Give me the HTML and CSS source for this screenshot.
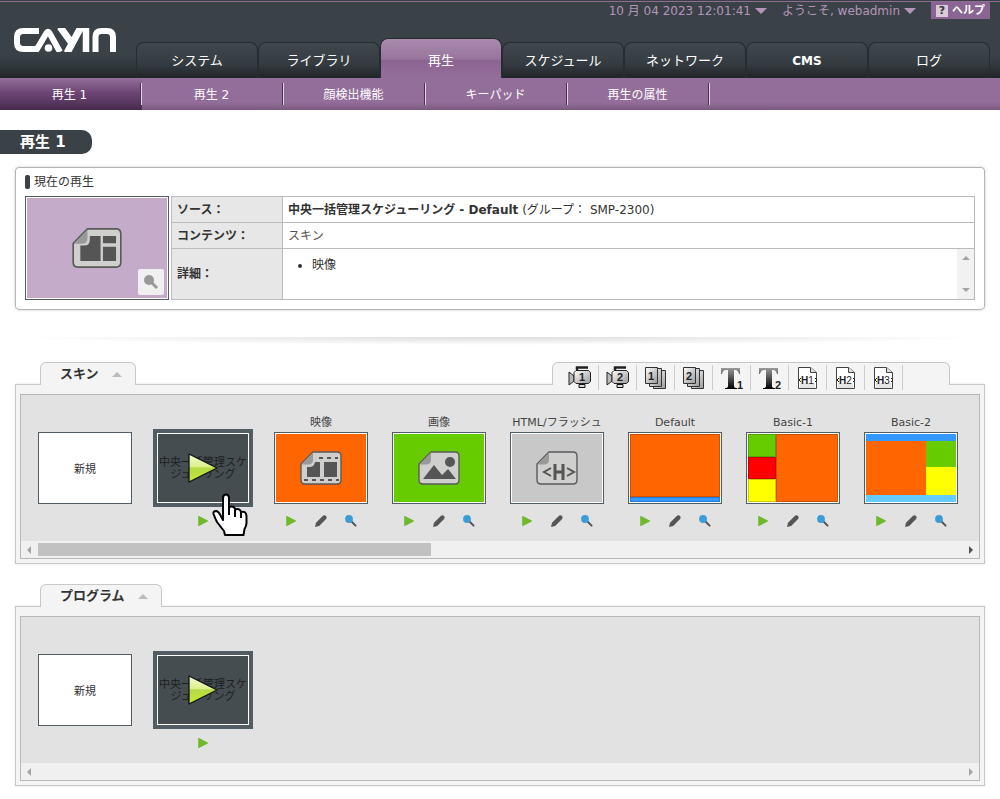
FILE: index.html
```html
<!DOCTYPE html>
<html lang="ja">
<head>
<meta charset="utf-8">
<title>再生 1</title>
<link rel="stylesheet" href="styles.css">
</head>
<body>
<svg class="defs" aria-hidden="true">
  <defs>
    <linearGradient id="metal" x1="0" y1="0" x2="1" y2="1"><stop offset="0" stop-color="#fff"/><stop offset="1" stop-color="#999"/></linearGradient>
    <linearGradient id="ink" x1="0" y1="0" x2="0" y2="1"><stop offset="0" stop-color="#999"/><stop offset="1" stop-color="#000"/></linearGradient>
    <linearGradient id="lime" x1="0" y1="0" x2="0" y2="1"><stop offset="0" stop-color="#f4fbd5"/><stop offset=".45" stop-color="#dcef8a"/><stop offset=".5" stop-color="#b5d943"/><stop offset="1" stop-color="#c5ea3a"/></linearGradient>
    <symbol id="play" viewBox="0 0 12 12"><path d="M1.200 1.600v8.800q0 .800.800.500l8.700-4.300q.900-.600 0-1.200L2 1.100q-.800-.300-.800.500z" fill="#6fb92c"/></symbol>
    <symbol id="pencil" viewBox="0 0 14 14"><path d="M1 13l1-4.200L9 1.800q1.500-1.300 3 .100 1.400 1.500.1 3L5.200 12z" fill="#555"/></symbol>
    <symbol id="lens" viewBox="0 0 14 14"><path d="M7 7l4.600 4.600" stroke="#555" stroke-width="2" stroke-linecap="round"/><circle cx="5" cy="5" r="3.900" fill="#3c9bd9"/></symbol>
    <symbol id="sheet" viewBox="0 0 42 34"><path d="M13 1h24q4 0 4 4v24q0 4-4 4H5q-4 0-4-4V13z" fill="#cfcfcd" stroke="#5a5a5a" stroke-width="1.400"/><path d="M13 1.500v7q0 5-5 5H1.500z" fill="#999"/></symbol>
    <symbol id="bigplay" viewBox="0 0 32 32"><path d="M2 2v28l28-14z" fill="url(#lime)" stroke="#111" stroke-width="1.300" stroke-linejoin="round"/></symbol>
    <symbol id="camera" viewBox="0 0 24 24"><path d="M1 6l5 4v5l-5 4z" fill="#bbb" stroke="#222"/><path d="M9 4V1.500h11" fill="none" stroke="#222" stroke-width="2.500"/><path d="M8 4.500h12.500l2 2v9l-2 2H8l-2-2v-9z" fill="url(#metal)" stroke="#222"/><path d="M11 18.500h6v3h-6z" fill="#ddd" stroke="#111"/></symbol>
    <symbol id="stack" viewBox="0 0 24 24"><path d="M9.500 4.500h12v18h-12z" fill="url(#metal)" stroke="#333"/><path d="M5.500 2.500h12v18h-12z" fill="url(#metal)" stroke="#333"/><path d="M1.500 1.500h12v16h-12z" fill="url(#metal)" stroke="#333"/></symbol>
    <symbol id="tee" viewBox="0 0 24 24"><path d="M1 2h19v6h-1q-1-4-4-4h-1v16q0 2 3 2v1H5v-1q3 0 3-2V4H6Q3 4 2 8H1z" fill="url(#ink)"/></symbol>
    <symbol id="page" viewBox="0 0 24 24"><path d="M2.500 1.500h12l6 5v16h-18z" fill="#fff" stroke="#444"/><path d="M14.500 1.500v5h6" fill="#ddd" stroke="#444"/><path d="M4 17h15v5H4z" fill="#e5e5e5"/></symbol>
  </defs>
</svg>

<header class="header">
  <a class="logo" href="#" aria-label="CAYIN">
    <svg viewBox="0 0 102 24" width="102" height="24" fill="none" stroke="#fff" stroke-width="6">
      <path d="M25 3H9.500Q3 3 3 9v6q0 6 6.500 6H23L32.500 5q1.500-2.500 3 0L46 24"/>
      <circle cx="34.500" cy="20" r="3.800" fill="#fff" stroke="none"/>
      <path d="M46 -1l11 15M67 -1L53 25" stroke-width="7"/>
      <path d="M72 0v24" stroke-width="6.500"/>
      <path d="M81.500 24V9q0-6 6-6H93q6 0 6 6v15" stroke-width="6"/>
    </svg>
  </a>
  <div class="utility">
    <button class="util-button clock">10 月 04 2023 12:01:41 <i class="caret"></i></button>
    <button class="util-button user">ようこそ, webadmin <i class="caret"></i></button>
    <a class="help" href="#"><span class="help-mark">?</span>ヘルプ</a>
  </div>
  <nav class="tabs">
    <a class="tab" href="#">システム</a>
    <a class="tab" href="#">ライブラリ</a>
    <a class="tab tab-active" href="#">再生</a>
    <a class="tab" href="#">スケジュール</a>
    <a class="tab" href="#">ネットワーク</a>
    <a class="tab tab-latin" href="#">CMS</a>
    <a class="tab" href="#">ログ</a>
  </nav>
</header>
<nav class="subnav">
  <a class="sub sub-active" href="#">再生 1</a>
  <a class="sub" href="#">再生 2</a>
  <a class="sub" href="#">顔検出機能</a>
  <a class="sub" href="#">キーパッド</a>
  <a class="sub" href="#">再生の属性</a>
</nav>

<main>
  <h1 class="page-title">再生 1</h1>

  <section class="current">
    <h2 class="current-title">現在の再生</h2>
    <div class="current-body">
      <div class="preview">
        <svg class="preview-icon" viewBox="0 0 42 34" width="50" height="42"><use href="#sheet"/><path d="M7 15h3q5 0 5-5V7h9v21H7zM26 7h11v6H26zM26 16h11v12H26z" fill="#555"/></svg>
        <button class="preview-zoom" aria-label="拡大">
          <svg viewBox="0 0 18 18" width="18" height="18"><path d="M9 9l6 6" stroke="#999" stroke-width="3"/><circle cx="7" cy="7" r="5" fill="#999"/></svg>
        </button>
      </div>
      <table class="info">
        <tr><th scope="row">ソース：</th><td><strong>中央一括管理スケジューリング - Default</strong> (グループ： SMP-2300)</td></tr>
        <tr><th scope="row">コンテンツ：</th><td class="soft">スキン</td></tr>
        <tr><th scope="row">詳細：</th><td class="detail-cell">
          <div class="detail">
            <ul class="detail-list"><li>映像</li></ul>
            <div class="vscroll"><button class="arrow arrow-up" aria-label="上へ"></button><button class="arrow arrow-down" aria-label="下へ"></button></div>
          </div>
        </td></tr>
      </table>
    </div>
  </section>

  <div class="divider"></div>

  <section class="shelf">
    <div class="shelf-head">
      <button class="shelf-tab">スキン<i class="fold"></i></button>
      <div class="toolbar">
        <button class="tool"><svg width="24" height="24" viewBox="0 0 24 24"><use href="#camera"/><text class="tool-num" x="14" y="15">1</text></svg></button>
        <button class="tool"><svg width="24" height="24" viewBox="0 0 24 24"><use href="#camera"/><text class="tool-num" x="14" y="15">2</text></svg></button>
        <button class="tool"><svg width="24" height="24" viewBox="0 0 24 24"><use href="#stack"/><text class="tool-num" x="7" y="14">1</text></svg></button>
        <button class="tool"><svg width="24" height="24" viewBox="0 0 24 24"><use href="#stack"/><text class="tool-num" x="7" y="14">2</text></svg></button>
        <button class="tool"><svg width="24" height="24" viewBox="0 0 24 24"><use href="#tee"/><text class="tool-num" x="20" y="23">1</text></svg></button>
        <button class="tool"><svg width="24" height="24" viewBox="0 0 24 24"><use href="#tee"/><text class="tool-num" x="20" y="23">2</text></svg></button>
        <button class="tool"><svg width="24" height="24" viewBox="0 0 24 24"><use href="#page"/><path d="M5 12l-2 2 2 2M19 12l2 2-2 2" class="angle"/><text class="tool-h" x="5" y="18"><tspan class="tool-bold">H</tspan>1</text></svg></button>
        <button class="tool"><svg width="24" height="24" viewBox="0 0 24 24"><use href="#page"/><path d="M5 12l-2 2 2 2M19 12l2 2-2 2" class="angle"/><text class="tool-h" x="5" y="18"><tspan class="tool-bold">H</tspan>2</text></svg></button>
        <button class="tool"><svg width="24" height="24" viewBox="0 0 24 24"><use href="#page"/><path d="M5 12l-2 2 2 2M19 12l2 2-2 2" class="angle"/><text class="tool-h" x="5" y="18"><tspan class="tool-bold">H</tspan>3</text></svg></button>
      </div>
    </div>
    <div class="shelf-body">
      <div class="viewport">
        <div class="strip">
          <div class="item"><div class="name"></div><div class="stage"><button class="thumb thumb-new">新規</button></div></div>
          <div class="item">
            <div class="name"></div>
            <div class="stage">
              <button class="thumb thumb-hover"><span class="hover-name">中央一括管理スケジューリング</span><svg class="big-play" width="32" height="32"><use href="#bigplay"/></svg></button>
              <svg class="hand" viewBox="0 0 36 44" width="36" height="44"><path d="M11 27V5q0-3.500 3-3.500T17 5v10q1-2 3-1.500 3 .5 3 3 5-1.500 6 2.500 5-1.500 5.500 4v7q0 3-2 6l-1 6H13l-1-4q-4-5-7-9-2-4-3.500-8Q1 18 4 18q2 0 4 3.500l3 5.500z" fill="#fff" stroke="#000" stroke-width="2" stroke-linejoin="round"/><path d="M17 14v8M23 17v7M29 19v6" stroke="#000" stroke-width="2"/></svg>
            </div>
            <div class="actions"><button class="action" aria-label="再生"><svg width="12" height="12"><use href="#play"/></svg></button></div>
          </div>
          <div class="item">
            <div class="name">映像</div>
            <div class="stage"><button class="thumb"><span class="art orange"><svg viewBox="0 0 42 34" width="42" height="34"><use href="#sheet"/><path d="M7 16h3q4 0 5-5h5v15H7zM24 11h13v15H24z" fill="#555"/><path d="M19 7h19M4 29h35" stroke="#555" stroke-width="2" stroke-dasharray="4 4"/></svg></span></button></div>
            <div class="actions"><button class="action" aria-label="再生"><svg width="12" height="12"><use href="#play"/></svg></button><button class="action" aria-label="編集"><svg width="14" height="14"><use href="#pencil"/></svg></button><button class="action" aria-label="拡大"><svg width="14" height="14"><use href="#lens"/></svg></button></div>
          </div>
          <div class="item">
            <div class="name">画像</div>
            <div class="stage"><button class="thumb"><span class="art green"><svg viewBox="0 0 42 34" width="42" height="34"><use href="#sheet"/><path d="M5 28l11-14 8 10 6-6 8 10z" fill="#555"/><circle cx="32" cy="11" r="5" fill="#555"/></svg></span></button></div>
            <div class="actions"><button class="action" aria-label="再生"><svg width="12" height="12"><use href="#play"/></svg></button><button class="action" aria-label="編集"><svg width="14" height="14"><use href="#pencil"/></svg></button><button class="action" aria-label="拡大"><svg width="14" height="14"><use href="#lens"/></svg></button></div>
          </div>
          <div class="item">
            <div class="name">HTML/フラッシュ</div>
            <div class="stage"><button class="thumb"><span class="art silver"><svg viewBox="0 0 42 34" width="42" height="34"><use href="#sheet"/><path d="M15 17l-7 4 7 4M31 17l7 4-7 4" fill="none" stroke="#555" stroke-width="2"/><path d="M19 13v16M27 13v16M19 21h8" stroke="#555" stroke-width="3"/></svg></span></button></div>
            <div class="actions"><button class="action" aria-label="再生"><svg width="12" height="12"><use href="#play"/></svg></button><button class="action" aria-label="編集"><svg width="14" height="14"><use href="#pencil"/></svg></button><button class="action" aria-label="拡大"><svg width="14" height="14"><use href="#lens"/></svg></button></div>
          </div>
          <div class="item">
            <div class="name">Default</div>
            <div class="stage"><button class="thumb"><span class="art layout-default"><i class="orange edge"></i><i class="blue edge"></i></span></button></div>
            <div class="actions"><button class="action" aria-label="再生"><svg width="12" height="12"><use href="#play"/></svg></button><button class="action" aria-label="編集"><svg width="14" height="14"><use href="#pencil"/></svg></button><button class="action" aria-label="拡大"><svg width="14" height="14"><use href="#lens"/></svg></button></div>
          </div>
          <div class="item">
            <div class="name">Basic-1</div>
            <div class="stage"><button class="thumb"><span class="art layout-one"><i class="green edge"></i><i class="orange edge main-zone"></i><i class="red edge"></i><i class="yellow edge"></i></span></button></div>
            <div class="actions"><button class="action" aria-label="再生"><svg width="12" height="12"><use href="#play"/></svg></button><button class="action" aria-label="編集"><svg width="14" height="14"><use href="#pencil"/></svg></button><button class="action" aria-label="拡大"><svg width="14" height="14"><use href="#lens"/></svg></button></div>
          </div>
          <div class="item">
            <div class="name">Basic-2</div>
            <div class="stage"><button class="thumb"><span class="art layout-two"><i class="blue wide"></i><i class="orange tall"></i><i class="green"></i><i class="yellow"></i><i class="sky wide"></i></span></button></div>
            <div class="actions"><button class="action" aria-label="再生"><svg width="12" height="12"><use href="#play"/></svg></button><button class="action" aria-label="編集"><svg width="14" height="14"><use href="#pencil"/></svg></button><button class="action" aria-label="拡大"><svg width="14" height="14"><use href="#lens"/></svg></button></div>
          </div>
        </div>
        <div class="hscroll"><button class="arrow arrow-left" aria-label="左へ"></button><div class="track"><div class="grip"></div></div><button class="arrow arrow-right arrow-live" aria-label="右へ"></button></div>
      </div>
    </div>
  </section>

  <section class="shelf">
    <div class="shelf-head">
      <button class="shelf-tab">プログラム<i class="fold"></i></button>
    </div>
    <div class="shelf-body">
      <div class="viewport">
        <div class="strip">
          <div class="item"><div class="name"></div><div class="stage"><button class="thumb thumb-new">新規</button></div></div>
          <div class="item">
            <div class="name"></div>
            <div class="stage">
              <button class="thumb thumb-hover"><span class="hover-name">中央一括管理スケジューリング</span><svg class="big-play" width="32" height="32"><use href="#bigplay"/></svg></button>
            </div>
            <div class="actions"><button class="action" aria-label="再生"><svg width="12" height="12"><use href="#play"/></svg></button></div>
          </div>
        </div>
        <div class="hscroll"><button class="arrow arrow-left" aria-label="左へ"></button><div class="track"></div><button class="arrow arrow-right" aria-label="右へ"></button></div>
      </div>
    </div>
  </section>
</main>
</body>
</html>
```

FILE: styles.css
```css
*, *::before, *::after { box-sizing: border-box; }
body {
  margin: 0;
  background: #fff;
  color: #333;
  font: 12px/16px "DejaVu Sans", "Noto Sans CJK JP", sans-serif;
}
button {
  margin: 0;
  padding: 0;
  border: 0;
  background: none;
  color: inherit;
  font: inherit;
  cursor: pointer;
}
a { color: inherit; text-decoration: none; }
svg { display: block; }
.defs { position: absolute; width: 0; height: 0; }

/* Header */
.header {
  display: grid;
  grid-template-columns: 136px 1fr;
  grid-template-rows: 36px 40px;
  border-top: 1px solid #3a4146;
  background: linear-gradient(#3a4247 70%, #30373b 85%, #1f2427);
  box-shadow: inset 0 1px #8f6b96;
  padding: 1px 10px 0 0;
}
.logo {
  grid-row: 1 / 3;
  align-self: center;
  padding-left: 14px;
}
.utility {
  display: flex;
  justify-content: flex-end;
  align-items: flex-start;
  color: #b595bb;
}
.util-button {
  display: flex;
  align-items: center;
  gap: 4px;
  line-height: 18px;
}
.user { margin: 0 15px; }
.caret {
  border: 6px solid transparent;
  border-top-color: #b595bb;
  border-bottom: 0;
}
.help {
  display: flex;
  align-items: center;
  gap: 4px;
  height: 17px;
  padding: 0 5px;
  background: #8a6493;
  color: #fff;
  font-size: 11px;
  font-weight: bold;
  line-height: 15px;
}
.help-mark {
  width: 12px;
  height: 12px;
  background: #d8cadb;
  color: #333;
  line-height: 12px;
  text-align: center;
}
.tabs { display: flex; align-items: flex-end; }
.tab {
  flex: 1;
  height: 36px;
  border: 1px solid #262c30;
  border-bottom: 0;
  border-radius: 8px 8px 0 0;
  background: linear-gradient(#40484d, #353c41 60%, #1f2427);
  color: #fff;
  font-size: 13px;
  font-weight: 400;
  line-height: 36px;
  text-align: center;
}
.tab-latin { font-size: 12px; font-weight: bold; }
.tab-active {
  height: 40px;
  background: linear-gradient(#a98bad, #98749d 52%, #8b6492 54%, #946e9a);
  line-height: 44px;
}
.subnav {
  display: flex;
  height: 32px;
  background: linear-gradient(#946e9a 75%, #7a5a80);
}
.sub {
  position: relative;
  width: 142px;
  padding-right: 3px;
  color: #fff;
  line-height: 34px;
  text-align: center;
}
.sub::after {
  content: "";
  position: absolute;
  top: 5px;
  right: 0;
  width: 2px;
  height: 22px;
  border-left: 1px solid #4a2f50;
  border-right: 1px solid #e3d5e6;
}
.sub-active { background: linear-gradient(#946e9a, #6d4675 45%, #5d3a65 70%, #452a4b); }

/* Current playback */
.page-title {
  width: 92px;
  margin: 20px 0 13px;
  padding-left: 20px;
  border-radius: 0 10px 10px 0;
  background: #3a4247;
  color: #fff;
  font-size: 15px;
  line-height: 24px;
}
.current {
  margin: 0 15px;
  padding: 0 9px 9px;
  border: 1px solid #b3b3b3;
  border-radius: 4px;
  box-shadow: 0 0 3px #ccc;
}
.current-title {
  display: flex;
  align-items: center;
  gap: 4px;
  height: 28px;
  margin: 0;
  font-size: 12px;
  font-weight: 400;
  line-height: 18px;
}
.current-title::before {
  content: "";
  width: 5px;
  height: 14px;
  border-radius: 2px;
  background: #3a4247;
}
.current-body { display: flex; gap: 2px; }
.preview {
  position: relative;
  display: flex;
  flex: none;
  align-items: center;
  justify-content: center;
  width: 144px;
  height: 104px;
  border: 1px solid #525c63;
  background: #c4abc9;
  box-shadow: inset 0 0 0 1px #fff;
}
.preview-zoom {
  position: absolute;
  right: 4px;
  bottom: 4px;
  padding: 4px;
  border-radius: 2px;
  background: #f0f0f0;
}
.info {
  flex: 1;
  height: 104px;
  border-collapse: collapse;
}
.info th, .info td {
  height: 26px;
  padding: 0 5px;
  border: 1px solid #bbb;
  text-align: left;
}
.info th { width: 111px; background: #e7e7e7; }
.info .soft { color: #555; }
.info .detail-cell { height: 51px; padding: 0; }
.detail { display: flex; height: 50px; }
.detail-list { flex: 1; margin: 0; padding: 8px 0 0 29px; }
.vscroll {
  display: flex;
  flex-direction: column;
  justify-content: space-between;
  align-items: center;
  width: 17px;
  padding: 7px 0;
  background: #f1f1f1;
}
.arrow { border: 4px solid transparent; }
.arrow-up { border-top: 0; border-bottom-color: #a3a3a3; }
.arrow-down { border-bottom: 0; border-top-color: #a3a3a3; }
.arrow-left { border-left: 0; border-right-color: #a3a3a3; }
.arrow-right { border-right: 0; border-left-color: #a3a3a3; }
.arrow-live { border-left-color: #505050; }
.divider {
  height: 10px;
  margin: 27px 15px 15px;
  background: radial-gradient(ellipse 50% 80% at 50% 0, #dcdcdc, #fff);
}

/* Shelves */
.shelf { margin: 0 15px 20px; }
.shelf-head {
  display: flex;
  justify-content: space-between;
  height: 23px;
  padding: 0 35px 0 25px;
}
.shelf-tab, .toolbar {
  position: relative;
  display: flex;
  align-items: center;
  height: 23px;
  border: 1px solid #c8c8c8;
  border-bottom: 0;
  border-radius: 6px 6px 0 0;
  background: #f4f4f4;
}
.shelf-tab {
  gap: 13px;
  padding: 0 13px 0 19px;
  font-size: 13px;
  font-weight: bold;
}
.fold {
  border: 5px solid transparent;
  border-top: 0;
  border-bottom-color: #bbb;
}
.toolbar {
  align-items: flex-start;
  padding: 2px 46px 0 8px;
}
.tool {
  display: flex;
  justify-content: center;
  align-items: center;
  width: 38px;
  height: 25px;
  border-right: 1px solid #ccc;
}
.tool-num {
  fill: #222;
  font: bold 11px "Liberation Sans", sans-serif;
  text-anchor: middle;
}
.tool-h { fill: #222; font: 10px "Liberation Sans", sans-serif; }
.tool-bold { font-weight: bold; }
.angle { fill: none; stroke: #222; }
.shelf-body {
  margin-top: -1px;
  padding: 9px 4px 4px;
  border: 1px solid #c8c8c8;
  background: #f4f4f4;
  box-shadow: 0 0 2px #ddd;
}
.viewport { border: 1px solid #b8b8b8; background: #e2e2e2; }
.strip {
  display: flex;
  padding: 20px 0 7px 5px;
  overflow: hidden;
}
.item { flex: none; width: 118px; }
.name {
  height: 14px;
  color: #444;
  font-size: 11px;
  line-height: 16px;
  text-align: center;
  white-space: nowrap;
}
.stage {
  position: relative;
  display: flex;
  align-items: center;
  justify-content: center;
  height: 78px;
}
.thumb {
  width: 94px;
  height: 72px;
  padding: 1px;
  border: 1px solid #525c63;
  background: #fff;
  font-size: 11px;
}
.thumb-new { padding-top: 4px; }
.thumb-hover {
  position: relative;
  width: 100px;
  height: 78px;
  padding: 0;
  border: 4px solid #525c63;
  background: #464d50;
  box-shadow: inset 0 0 0 1px #fff;
  color: #1c2022;
  line-height: 12px;
}
.hover-name { display: block; padding-top: 2px; }
.big-play { position: absolute; top: 19px; left: 30px; }
.hand { position: absolute; top: 64px; left: 68px; z-index: 2; }
.art {
  display: grid;
  place-items: center;
  width: 100%;
  height: 100%;
}
.orange { background: #f60; }
.green { background: #6c0; }
.silver { background: #c8c8c8; }
.blue { background: #39f; }
.sky { background: #6cf; }
.red { background: #f00; }
.yellow { background: #ff0; }
.edge { box-shadow: inset 0 0 0 1px rgba(0, 0, 0, 0.2); }
.layout-default, .layout-one, .layout-two { place-items: stretch; }
.layout-default { grid-template-rows: 1fr 5px; }
.layout-one { grid-template: 23px 22px 23px / 28px 1fr; }
.main-zone { grid-row: 1 / 4; grid-column: 2; }
.layout-two { grid-template: 7px 26px 28px 7px / 1fr 30px; }
.wide { grid-column: 1 / 3; }
.tall { grid-row: 2 / 4; }
.actions {
  display: flex;
  justify-content: center;
  height: 27px;
}
.action {
  display: flex;
  justify-content: center;
  align-items: center;
  width: 30px;
}
.hscroll {
  display: flex;
  align-items: center;
  height: 17px;
  padding: 0 6px;
  background: #f0f0f0;
}
.track { flex: 1; margin: 0 7px; }
.grip { width: 42.5%; height: 13px; background: #c1c1c1; }
```
